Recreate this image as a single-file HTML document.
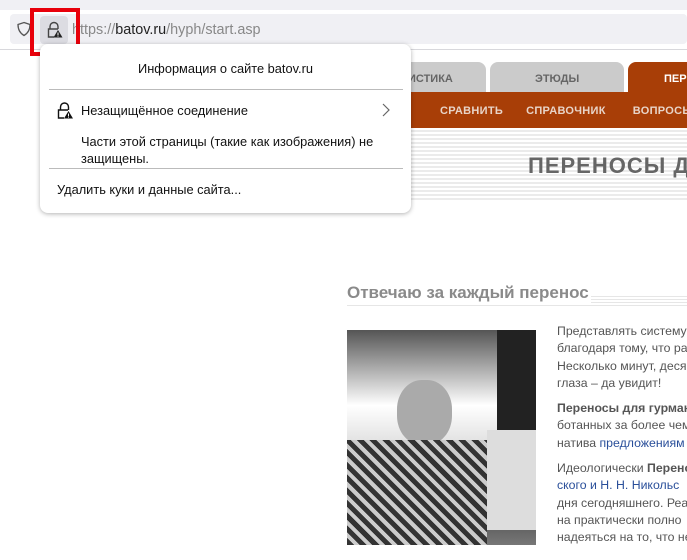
<!DOCTYPE html>
<html><head><meta charset="utf-8"><style>
*{margin:0;padding:0;box-sizing:border-box}
body{width:687px;height:560px;overflow:hidden;background:#fff;font-family:"Liberation Sans",sans-serif;position:relative}
.abs{position:absolute}
</style></head><body>
<div class="abs" style="left:0;top:0;width:687px;height:10px;background:#f0f0f4"></div>
<div class="abs" style="left:0;top:49px;width:687px;height:1px;background:#d8d8dc"></div>
<div class="abs" style="left:10px;top:14px;width:677px;height:30px;background:#f0f0f4;border-radius:4px"></div>
<svg class="abs" style="left:16px;top:21px" width="16" height="16" viewBox="0 0 16 16"><path d="M8 1.5 L14 3.5 C14 9 11.5 12.5 8 14.5 C4.5 12.5 2 9 2 3.5 Z" fill="none" stroke="#555" stroke-width="1.3"/></svg>
<div class="abs" style="left:40px;top:16px;width:28px;height:28px;background:#dcdce2;border-radius:4px"></div>
<svg class="abs" style="left:45px;top:21px" width="18" height="18" viewBox="0 0 18 18"><path d="M5 8 V5.5 a4 4 0 0 1 8 0 V8" fill="none" stroke="#444" stroke-width="1.4"/><path d="M9 16 H3.5 V8 H13" fill="none" stroke="#444" stroke-width="1.4"/><path d="M13 9 L17.5 16.5 H8.5 Z" fill="#222"/><rect x="12.5" y="11.5" width="1" height="2.6" fill="#fff"/><rect x="12.5" y="14.6" width="1" height="1" fill="#fff"/></svg>
<div class="abs" style="left:72px;top:22px;font-size:14.4px;color:#888;white-space:nowrap">https://<span style="color:#222">batov.ru</span>/hyph/start.asp</div>
<div class="abs" style="left:30px;top:8px;width:50px;height:48px;border:4px solid #e8000b"></div>

<div class="abs" style="left:340px;top:62px;width:146px;height:31px;background:#cbcbcb;border-radius:8px 8px 0 0"></div>
<div class="abs" style="left:408px;top:73px;font-size:11px;font-weight:bold;color:#666">ИСТИКА</div>
<div class="abs" style="left:490px;top:62px;width:134px;height:31px;background:#cbcbcb;border-radius:8px 8px 0 0"></div>
<div class="abs" style="left:535px;top:73px;font-size:11px;font-weight:bold;color:#666">ЭТЮДЫ</div>
<div class="abs" style="left:628px;top:62px;width:70px;height:31px;background:#a83e07;border-radius:8px 8px 0 0"></div>
<div class="abs" style="left:664px;top:73px;font-size:11px;font-weight:bold;color:#fff">ПЕР</div>
<div class="abs" style="left:300px;top:92px;width:387px;height:36px;background:#a83e07"></div>
<div class="abs" style="left:440px;top:105px;font-size:11px;font-weight:bold;color:#e8d4c8;white-space:nowrap;letter-spacing:0.3px">СРАВНИТЬ<span style="margin-left:23px">СПРАВОЧНИК</span><span style="margin-left:27px">ВОПРОСЫ</span></div>
<div class="abs" style="left:300px;top:128px;width:387px;height:72px;background:repeating-linear-gradient(#fff 0 2px,#ebebeb 2px 4px)"></div>
<div class="abs" style="left:528px;top:153px;font-size:22px;font-weight:bold;color:#666;letter-spacing:1px;white-space:nowrap">ПЕРЕНОСЫ Д</div>
<div class="abs" style="left:347px;top:294px;width:340px;height:12px;background:repeating-linear-gradient(#fff 0 2px,#e6e6e6 2px 3px)"></div>
<div class="abs" style="left:347px;top:283px;font-size:17px;font-weight:bold;color:#8a8a8a;background:#fff;padding-right:2px;white-space:nowrap">Отвечаю за каждый перенос</div>
<div class="abs" style="left:347px;top:330px;width:189px;height:215px;background:linear-gradient(#555 0%,#fff 35%,#ddd 55%,#444 80%,#777 100%)">
<div class="abs" style="left:50px;top:50px;width:55px;height:65px;border-radius:45%;background:#aaa"></div>
<div class="abs" style="left:0;top:110px;width:140px;height:105px;background:repeating-linear-gradient(45deg,#333 0 5px,#ccc 5px 9px)"></div>
<div class="abs" style="left:150px;top:0;width:39px;height:100px;background:#222"></div>
<div class="abs" style="left:140px;top:100px;width:49px;height:100px;background:#ddd"></div>
</div>
<div class="abs" style="left:557px;top:323px;font-size:12.3px;line-height:17.3px;color:#555;white-space:nowrap">Представлять систему<br>благодаря тому, что ра<br>Несколько минут, деся<br>глаза – да увидит!<div style="height:8px"></div><b>Переносы для гурман</b><br>ботанных за более чем<br>натива <span style="color:#2a4f9a">предложениям</span><div style="height:8px"></div>Идеологически <b>Перенос</b><br><span style="color:#2a4f9a">ского и Н. Н. Никольс</span><br>дня сегодняшнего. Реа<br>на практически полно<br>надеяться на то, что не</div>

<div class="abs" style="left:40px;top:44px;width:371px;height:169px;background:#fff;border-radius:8px;box-shadow:0 1px 5px rgba(0,0,0,.3)"></div>
<div class="abs" style="left:40px;top:61px;width:371px;text-align:center;font-size:12.8px;color:#111">Информация о сайте batov.ru</div>
<div class="abs" style="left:49px;top:89px;width:354px;height:1px;background:#bbb"></div>
<svg class="abs" style="left:56px;top:102px" width="18" height="18" viewBox="0 0 18 18"><path d="M4.5 8 V5 a4 4 0 0 1 8 0 V8" fill="none" stroke="#111" stroke-width="1.4"/><path d="M8 16 H2.5 V8 H12" fill="none" stroke="#111" stroke-width="1.4"/><path d="M12.5 9 L17 16.5 H8 Z" fill="#111"/><rect x="12" y="11.5" width="1" height="2.6" fill="#fff"/><rect x="12" y="14.6" width="1" height="1" fill="#fff"/></svg>
<div class="abs" style="left:81px;top:103px;font-size:12.8px;color:#111">Незащищённое соединение</div>
<svg class="abs" style="left:381px;top:103px" width="10" height="14" viewBox="0 0 10 14"><path d="M2 1 L8 7 L2 13" fill="none" stroke="#666" stroke-width="1.2"/></svg>
<div class="abs" style="left:81px;top:133px;font-size:12.8px;line-height:17px;color:#111">Части этой страницы (такие как изображения) не<br>защищены.</div>
<div class="abs" style="left:49px;top:168px;width:354px;height:1px;background:#bbb"></div>
<div class="abs" style="left:57px;top:182px;font-size:12.8px;color:#111">Удалить куки и данные сайта...</div>
</body></html>
